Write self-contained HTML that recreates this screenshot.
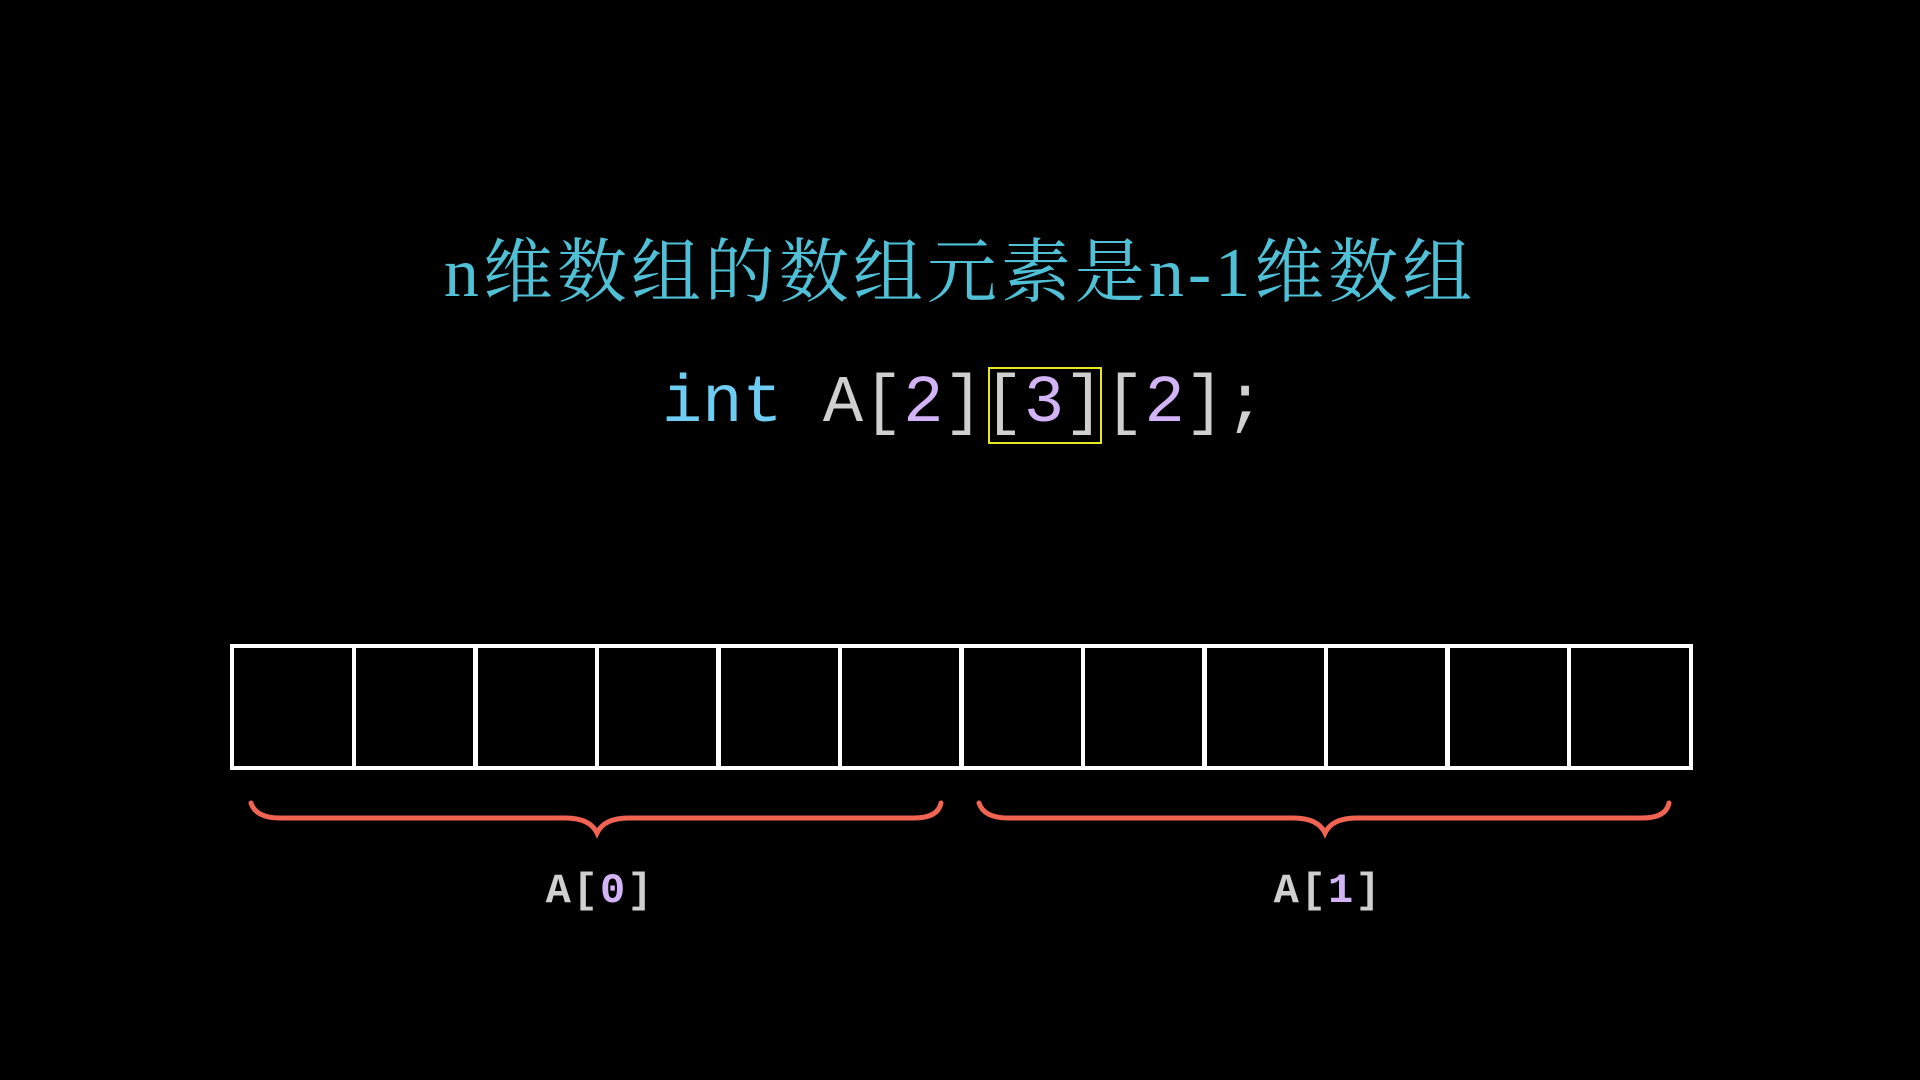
<!DOCTYPE html>
<html><head><meta charset="utf-8"><style>
body{margin:0;width:1920px;height:1080px;background:#000;position:relative;overflow:hidden}
.t{position:absolute;left:0;width:1920px;text-align:center;top:216px;font:70px "Liberation Serif","Noto Serif CJK SC",serif;color:#4fc0d6;letter-spacing:4px}
.c{position:absolute;left:662px;top:366px;font:67px/76px "Liberation Mono",monospace;color:#cfcfcf;white-space:pre}
.k{color:#6fcdf4}.n{color:#d2b4f6}
.y{position:absolute;left:988px;top:367px;width:110px;height:73px;border:2px solid #e8e820}
.b{position:absolute;top:644px;width:118px;height:118px;border:4px solid #fff}
.l{position:absolute;top:866px;font:bold 42px/50px "Liberation Mono",monospace;color:#cfcfcf;width:200px;text-align:center;letter-spacing:2px}
</style></head><body>
<div class="t">n维数组的数组元素是n-1维数组</div>
<div class="c"><span class="k">int</span> A[<span class="n">2</span>][<span class="n">3</span>][<span class="n">2</span>];</div>
<div class="y"></div>
<div class="b" style="left:230px"></div><div class="b" style="left:351.5px"></div><div class="b" style="left:473px"></div><div class="b" style="left:594.5px"></div><div class="b" style="left:716px"></div><div class="b" style="left:837.5px"></div><div class="b" style="left:959px"></div><div class="b" style="left:1080.5px"></div><div class="b" style="left:1202px"></div><div class="b" style="left:1323.5px"></div><div class="b" style="left:1445px"></div><div class="b" style="left:1566.5px"></div>
<svg width="1920" height="1080" style="position:absolute;left:0;top:0">
<g fill="none" stroke="#f26452" stroke-width="5" stroke-linecap="round">
<path d="M251 803 Q256 818 280 818 L565 818 Q590 818 597 833 Q604 818 629 818 L914 818 Q938 818 941 803"/>
<path d="M979 803 Q984 818 1008 818 L1293 818 Q1318 818 1325 833 Q1332 818 1357 818 L1642 818 Q1666 818 1669 803"/>
</g></svg>
<div class="l" style="left:500px">A[<span class="n">0</span>]</div>
<div class="l" style="left:1228px">A[<span class="n">1</span>]</div>
</body></html>
